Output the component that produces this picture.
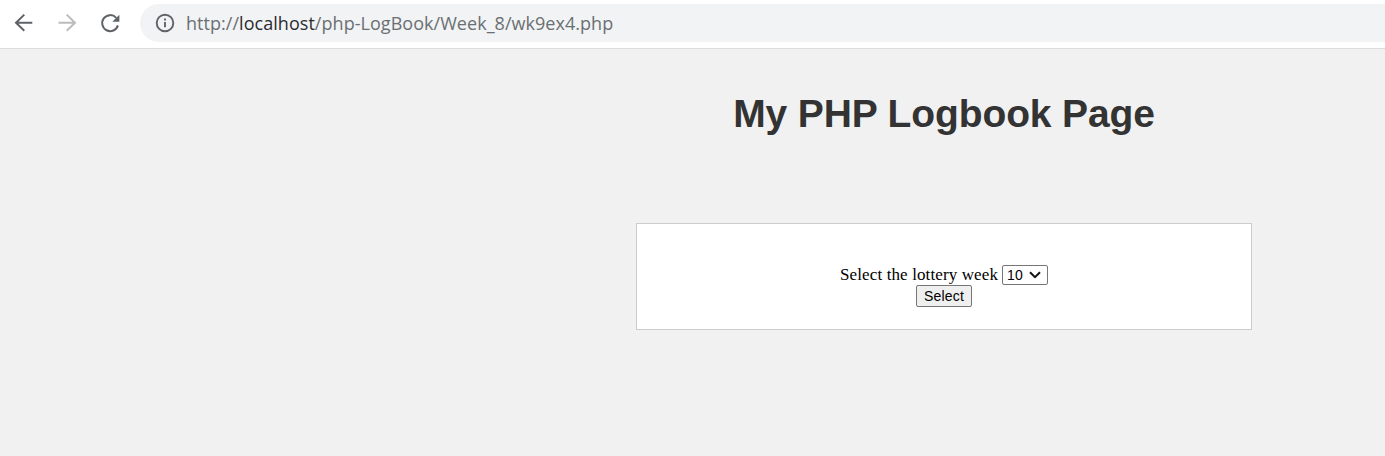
<script>
  const weeks = [10];
</script>

<div class="window">
  <header class="toolbar">
    <svg class="nav" width="140" height="48" viewBox="0 0 140 48" fill="none" stroke-width="2" aria-hidden="true">
      <path d="M32.3 22.7H16M24.3 14.6L16 22.7L24.3 30.8" stroke="#5f6368" />
      <path d="M58.5 22.7H75M66.7 14.6L75 22.7L66.7 30.8" stroke="#babcbe" />
      <path d="M116.2 17.8A8 8 0 1 0 117.9 25.4" stroke="#5f6368" />
      <path d="M119.4 14.7V21.8H112.3Z" fill="#5f6368" />
    </svg>
    <div class="address">
      <svg width="20" height="20" viewBox="0 0 20 20" fill="none" stroke="#5f6368" stroke-width="1.9" aria-hidden="true">
        <circle cx="10" cy="10" r="8.3" />
        <path d="M10 9V14.2M10 5.5V7.5" />
      </svg>
      <span class="url">http://<b>localhost</b>/php-LogBook/Week_8/wk9ex4.php</span>
    </div>
  </header>
  <main>
    <h1>My PHP Logbook Page</h1>
    <form class="card">
      <div class="row">
        <span class="label">Select the lottery week</span>
        <div class="picker">
          <span>{weeks[0]}</span>
          <svg width="12" height="8" viewBox="0 0 12 8" fill="none" stroke="#111" stroke-width="2" aria-hidden="true"><path d="M1 1.2L6 6.2L11 1.2" /></svg>
        </div>
      </div>
      <button type="button">Select</button>
    </form>
  </main>
</div>

<style>
  :global(body) { margin: 0; }
  .window { height: 456px; background: #f1f1f1; overflow: hidden; display: flex; flex-direction: column; }
  .toolbar { height: 48px; flex: none; background: #fff; border-bottom: 1px solid #dadce0; display: flex; }
  .nav { flex: none; }
  .address { flex: 1; height: 38px; margin-top: 4px; background: #f1f3f4; border-radius: 19px 0 0 19px; display: flex; align-items: center; padding-left: 15px; box-sizing: border-box; }
  .url { margin-left: 11px; font: 400 18px/38px "Open Sans", sans-serif; color: #6b6f73; white-space: nowrap; letter-spacing: 0.04px; }
  .url b { font-weight: 400; color: #2b2c2f; }
  main { width: 616px; margin-left: 636px; display: flex; flex-direction: column; align-items: center; }
  h1 { margin: 42px 0 0; font: bold 39px/46px "Liberation Sans", Arial, sans-serif; letter-spacing: -0.12px; color: #333; white-space: nowrap; }
  .card { width: 616px; height: 107px; box-sizing: border-box; margin: 86px 0 0; padding-top: 41px; border: 1px solid #ccc; background: #fff; display: flex; flex-direction: column; align-items: center; }
  .row { display: flex; gap: 4px; height: 20px; }
  .label { width: 158px; font: 17px/20px "Liberation Serif", "Times New Roman", serif; color: #000; white-space: nowrap; letter-spacing: 0.12px; }
  .picker { width: 46px; height: 20px; box-sizing: border-box; border: 1px solid #767676; border-radius: 2px; display: flex; align-items: center; justify-content: space-between; padding: 0 6px 0 4px; font: 14px/18px "Liberation Sans", Arial, sans-serif; color: #000; letter-spacing: 0.3px; }
  button { width: 56px; height: 22px; padding: 0; border: 1px solid #767676; border-radius: 2px; background: #efefef; font: 14px/20px "Liberation Sans", Arial, sans-serif; color: #000; letter-spacing: 0.2px; }
</style>
